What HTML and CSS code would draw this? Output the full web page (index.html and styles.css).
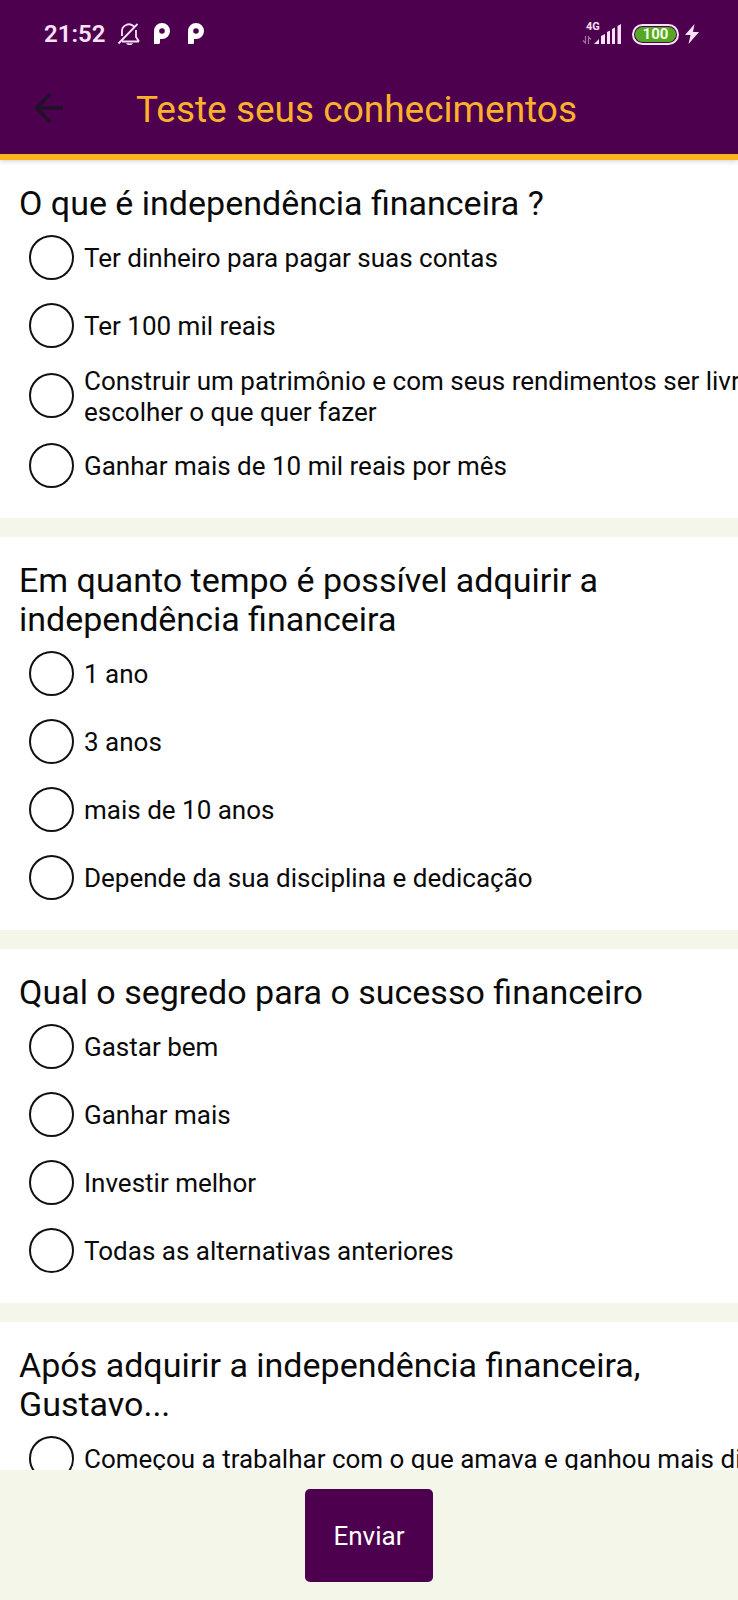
FILE: index.html
```html
<!DOCTYPE html>
<html lang="pt-BR">
<head>
  <meta charset="UTF-8">
  <meta name="viewport" content="width=device-width, initial-scale=1.0">
  <title>Teste seus conhecimentos</title>
  <link rel="stylesheet" href="styles.css">
</head>
<body>
  <header class="header">
    <div class="status-bar">
      <div class="status-left">
        <span class="clock">21:52</span>
        <svg class="icon-bell" width="24" height="24" viewBox="0 0 24 24" fill="none" stroke="#fbe0fb" stroke-width="1.8">
          <path d="M5 19.500h17M5 14V10a7 7 0 0 1 12-5.500M19 8v7l3 4.500M1.500 21.500L20.500 2"/>
          <path d="M9 21.200h7c-1 2.500-6 2.500-7 0z" fill="#fbe0fb" stroke="none"/>
        </svg>
        <svg class="icon-p" width="16" height="22" viewBox="0 0 16 22">
          <path fill="#fff" fill-rule="evenodd" d="M0 21V8a8 8 0 1 1 8 8H6v3.500A1.500 1.500 0 0 1 4.500 21zM8 5.200a2.800 2.800 0 1 0 0 5.600 2.800 2.800 0 0 0 0-5.600z"/>
        </svg>
        <svg class="icon-p" width="16" height="22" viewBox="0 0 16 22">
          <path fill="#fff" fill-rule="evenodd" d="M0 21V8a8 8 0 1 1 8 8H6v3.500A1.500 1.500 0 0 1 4.500 21zM8 5.200a2.800 2.800 0 1 0 0 5.600 2.800 2.800 0 0 0 0-5.600z"/>
        </svg>
      </div>
      <div class="status-right">
        <div class="signal">
          <span class="network">4G</span>
          <svg width="40" height="24" viewBox="0 0 40 24">
            <path d="M3.500 14v7L1 18.500M6.500 22v-7L9 17.500" fill="none" stroke="#a273a2" stroke-width="1.200"/>
            <path d="M12 22l5-5v5zM19 22v-8l4-2v10zM25 22V10l3-1.500V22zM30 22V7l3-1.500V22zM35.500 22V4l3.500-2v20z" fill="#fbe0fb"/>
          </svg>
        </div>
        <span class="battery"><span class="battery-level">100</span></span>
        <svg class="icon-bolt" width="14" height="20" viewBox="0 0 14 20">
          <path d="M9.500 0L0 11h5.500L3.500 20 14 8H8z" fill="#fbe0fb"/>
        </svg>
      </div>
    </div>
    <div class="toolbar">
      <button class="back" type="button" aria-label="Voltar">
        <svg width="30" height="32" viewBox="0 0 30 32" fill="none" stroke="#21102a" stroke-width="3.500">
          <path d="M29 16H3M16 2L2.500 16L16 30"/>
        </svg>
      </button>
      <h1 class="title">Teste seus conhecimentos</h1>
    </div>
  </header>

  <form class="quiz">
    <div class="questions">
      <fieldset class="card">
        <legend class="question">O que é independência financeira ?</legend>
        <label class="option"><input type="radio" name="q1"><span>Ter dinheiro para pagar suas contas</span></label>
        <label class="option"><input type="radio" name="q1"><span>Ter 100 mil reais</span></label>
        <label class="option option-tall"><input type="radio" name="q1"><span>Construir um patrimônio e com seus rendimentos ser livre para<br>escolher o que quer fazer</span></label>
        <label class="option"><input type="radio" name="q1"><span>Ganhar mais de 10 mil reais por mês</span></label>
      </fieldset>

      <fieldset class="card">
        <legend class="question">Em quanto tempo é possível adquirir a independência financeira</legend>
        <label class="option"><input type="radio" name="q2"><span>1 ano</span></label>
        <label class="option"><input type="radio" name="q2"><span>3 anos</span></label>
        <label class="option"><input type="radio" name="q2"><span>mais de 10 anos</span></label>
        <label class="option"><input type="radio" name="q2"><span>Depende da sua disciplina e dedicação</span></label>
      </fieldset>

      <fieldset class="card">
        <legend class="question">Qual o segredo para o sucesso financeiro</legend>
        <label class="option"><input type="radio" name="q3"><span>Gastar bem</span></label>
        <label class="option"><input type="radio" name="q3"><span>Ganhar mais</span></label>
        <label class="option"><input type="radio" name="q3"><span>Investir melhor</span></label>
        <label class="option"><input type="radio" name="q3"><span>Todas as alternativas anteriores</span></label>
      </fieldset>

      <fieldset class="card">
        <legend class="question">Após adquirir a independência financeira, Gustavo...</legend>
        <label class="option"><input type="radio" name="q4"><span>Começou a trabalhar com o que amava e ganhou mais dinheiro</span></label>
      </fieldset>
    </div>

    <div class="footer">
      <button class="send" type="submit">Enviar</button>
    </div>
  </form>
</body>
</html>
```
FILE: styles.css
```css
* {
  box-sizing: border-box;
}

body {
  display: flex;
  flex-direction: column;
  height: 100vh;
  margin: 0;
  overflow: hidden;
  font-family: Roboto, sans-serif;
  background-color: #f4f6ea;
  color: #0a0a0a;
}

.header {
  position: relative;
  z-index: 1;
  flex: none;
  background-color: #4d004d;
  border-bottom: 6px solid #fdb31c;
  box-shadow: 0 1px 5px rgba(0, 0, 0, 0.2);
}

.status-bar {
  display: flex;
  justify-content: space-between;
  align-items: center;
  height: 68px;
  padding: 0 39px 0 44px;
  color: #fbe0fb;
}

.status-left,
.status-right {
  display: flex;
  align-items: center;
}

.clock {
  font-size: 24px;
  font-weight: 600;
}

.icon-bell {
  margin-left: 12px;
}

.icon-p {
  margin-left: 18px;
}

.icon-bell + .icon-p {
  margin-left: 13px;
}

.signal {
  position: relative;
  height: 24px;
}

.network {
  position: absolute;
  top: 0;
  left: 4px;
  font-size: 11px;
  font-weight: 700;
  line-height: 10px;
}

.battery {
  width: 47px;
  height: 21px;
  margin-left: 10px;
  padding: 1px;
  border: 2px solid #fbe0fb;
  border-radius: 11px;
}

.battery-level {
  display: block;
  border-radius: 8px;
  background-color: #55a822;
  color: #f4ffe8;
  font-size: 15px;
  font-weight: 700;
  line-height: 15px;
  text-align: center;
}

.icon-bolt {
  margin-left: 6px;
}

.toolbar {
  display: flex;
  align-items: flex-start;
  height: 86px;
  padding: 20px 34px 0;
}

.back {
  display: flex;
  margin-top: 4px;
  padding: 0;
  border: 0;
  background: none;
  cursor: pointer;
}

.title {
  margin: 0 0 0 72px;
  color: #fdb02c;
  font-size: 37px;
  font-weight: 400;
  line-height: 44px;
}

.quiz {
  display: flex;
  flex: 1;
  flex-direction: column;
  min-height: 0;
}

.questions {
  flex: 1;
  min-height: 0;
  overflow: hidden;
}

.card {
  min-width: 0;
  margin: 0 0 19px;
  padding: 24px 0 19px;
  border: 0;
  background-color: #fff;
}

.question {
  float: left;
  width: 100%;
  padding: 0 60px 0 19px;
  font-size: 34px;
  line-height: 39px;
}

.option {
  display: flex;
  clear: both;
  align-items: center;
  gap: 10px;
  height: 68px;
  padding-left: 29px;
  font-size: 26px;
  line-height: 31px;
  white-space: nowrap;
}

.option-tall {
  height: 72px;
}

.option span {
  padding-top: 3px;
}

.option input {
  appearance: none;
  flex: none;
  width: 45px;
  height: 45px;
  margin: 0;
  border: 2px solid #111;
  border-radius: 50%;
  background-color: #fff;
}

.option input:checked {
  box-shadow: inset 0 0 0 8px #fff;
  background-color: #4d004d;
}

.footer {
  display: flex;
  flex: none;
  justify-content: center;
  padding: 19px 0 18px;
}

.send {
  padding: 32px 28px 30px;
  border: 0;
  border-radius: 5px;
  background-color: #4d004d;
  color: #fff;
  font-family: inherit;
  font-size: 26px;
  line-height: 31px;
  cursor: pointer;
}
```
